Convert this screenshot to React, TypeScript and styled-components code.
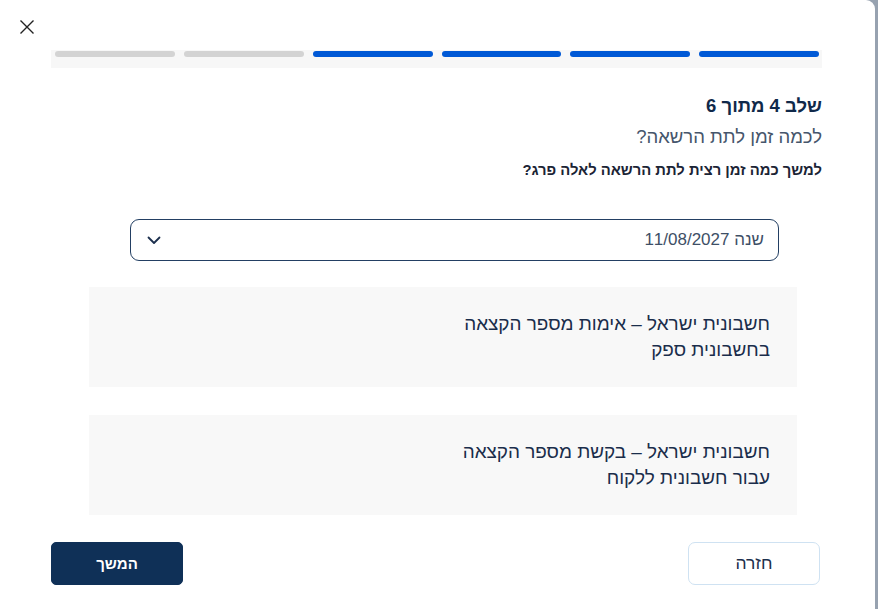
import React from "react";
import styled, { createGlobalStyle } from "styled-components";

const GlobalStyle = createGlobalStyle`
  html, body {
    margin: 0;
    padding: 0;
    background: #97a2b0;
  }
  body {
    font-family: "Liberation Sans", "DejaVu Sans", sans-serif;
  }
  * { box-sizing: border-box; }
`;

const Modal = styled.div`
  position: relative;
  width: 875px;
  min-height: 609px;
  background: #ffffff;
  border-top-right-radius: 9px;
  padding: 50px 53px 24px 51px;
  direction: rtl;
`;

const CloseButton = styled.button`
  position: absolute;
  top: 18px;
  left: 18px;
  width: 18px;
  height: 18px;
  padding: 0;
  border: none;
  background: transparent;
  cursor: pointer;
  display: flex;
  align-items: center;
  justify-content: center;
`;

const Progress = styled.div`
  display: flex;
  gap: 9px;
  height: 18px;
  padding: 1px 3px 0 4px;
  background: #f7f7f7;
`;

const Bar = styled.div<{ $active: boolean }>`
  flex: 1;
  height: 6px;
  border-radius: 3px;
  background: ${(p) => (p.$active ? "#0059d6" : "#d3d3d3")};
`;

const StepTitle = styled.h2`
  margin: 26px 0 0;
  font-size: 18.5px;
  line-height: 24px;
  font-weight: 700;
  color: #10294a;
`;

const Subtitle = styled.p`
  margin: 6px 0 0;
  font-size: 18.5px;
  line-height: 26px;
  font-weight: 400;
  color: #46566c;
`;

const Question = styled.p`
  margin: 10px 0 0;
  font-size: 14.8px;
  line-height: 20px;
  font-weight: 700;
  color: #1b2435;
`;

const Select = styled.div`
  margin: 39px 43px 0 79px;
  height: 42px;
  border: 1px solid #233f63;
  border-radius: 9px;
  display: flex;
  align-items: center;
  justify-content: space-between;
  padding: 0 14px 0 16px;
  font-size: 17px;
  color: #3e4f66;
  cursor: pointer;
`;

const Cards = styled.div`
  margin: 26px 25px 0 38px;
  display: flex;
  flex-direction: column;
  gap: 28px;
`;

const Card = styled.div`
  height: 100px;
  background: #f8f8f8;
  display: flex;
  flex-direction: column;
  justify-content: center;
  padding: 0 27px;
  font-size: 18.9px;
  line-height: 26px;
  color: #1a2d4b;
`;

const Footer = styled.div`
  margin-top: 27px;
  display: flex;
  justify-content: space-between;
  padding-right: 2px;
`;

const Button = styled.button<{ $primary?: boolean }>`
  width: 132px;
  height: 43px;
  border-radius: ${(p) => (p.$primary ? "5px" : "7px")};
  border: 1px solid ${(p) => (p.$primary ? "#0f3057" : "#cfe2f2")};
  background: ${(p) => (p.$primary ? "#0f3057" : "#ffffff")};
  color: ${(p) => (p.$primary ? "#ffffff" : "#1c2f4d")};
  font-family: inherit;
  font-size: ${(p) => (p.$primary ? "15px" : "17.5px")};
  font-weight: ${(p) => (p.$primary ? 700 : 400)};
  cursor: pointer;
`;

const steps = [true, true, true, true, false, false];

export default function App() {
  return (
    <>
      <GlobalStyle />
      <Modal>
        <CloseButton aria-label="סגור">
          <svg width="16" height="16" viewBox="0 0 16 16">
            <path d="M1.5 1.5 L14.5 14.5 M14.5 1.5 L1.5 14.5" stroke="#222" strokeWidth="1.4" fill="none" />
          </svg>
        </CloseButton>
        <Progress>
          {steps.map((a, i) => (
            <Bar key={i} $active={a} />
          ))}
        </Progress>
        <StepTitle>שלב 4 מתוך 6</StepTitle>
        <Subtitle>לכמה זמן לתת הרשאה?</Subtitle>
        <Question>למשך כמה זמן רצית לתת הרשאה לאלה פרג?</Question>
        <Select>
          <span>שנה 11/08/2027</span>
          <svg width="14" height="9" viewBox="0 0 14 9">
            <path d="M1.5 1.5 L7 7 L12.5 1.5" stroke="#1c2f4d" strokeWidth="1.8" fill="none" strokeLinecap="round" strokeLinejoin="round" />
          </svg>
        </Select>
        <Cards>
          <Card>
            <div>חשבונית ישראל – אימות מספר הקצאה</div>
            <div>בחשבונית ספק</div>
          </Card>
          <Card>
            <div>חשבונית ישראל – בקשת מספר הקצאה</div>
            <div>עבור חשבונית ללקוח</div>
          </Card>
        </Cards>
        <Footer>
          <Button>חזרה</Button>
          <Button $primary>המשך</Button>
        </Footer>
      </Modal>
    </>
  );
}
